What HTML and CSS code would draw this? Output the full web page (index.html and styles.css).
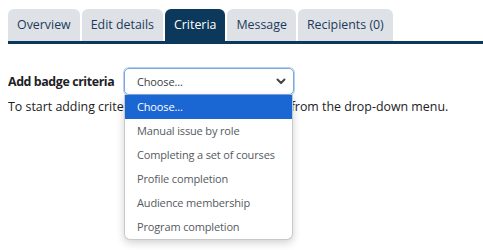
FILE: index.html
```html
<!DOCTYPE html>
<html lang="en">
<head>
  <meta charset="UTF-8">
  <title>Badge criteria</title>
  <link rel="stylesheet" href="styles.css">
</head>
<body>
  <ul class="tabs">
    <li class="tab">Overview</li>
    <li class="tab">Edit details</li>
    <li class="tab active">Criteria</li>
    <li class="tab">Message</li>
    <li class="tab">Recipients (0)</li>
  </ul>

  <div class="criteria">
    <div class="row">
      <label class="label" for="type">Add badge criteria</label>
      <div class="select-wrap">
        <div class="select" id="type">
          <span>Choose...</span>
          <svg class="chev" width="10" height="7" viewBox="0 0 10 7">
            <path d="M1.5 1.5 L5 5 L8.5 1.5" fill="none" stroke="#444" stroke-width="2" stroke-linecap="round" stroke-linejoin="round"/>
          </svg>
        </div>
        <ul class="options">
          <li class="opt selected">Choose...</li>
          <li class="opt">Manual issue by role</li>
          <li class="opt">Completing a set of courses</li>
          <li class="opt">Profile completion</li>
          <li class="opt">Audience membership</li>
          <li class="opt">Program completion</li>
        </ul>
      </div>
    </div>
    <p class="hint">To start adding criteria, select one of the options from the drop-down menu.</p>
  </div>
</body>
</html>
```

FILE: styles.css
```css
* {
  margin: 0;
  padding: 0;
  box-sizing: border-box;
}

html {
  background: #fff;
}

body {
  font-family: "Open Sans", "Noto Sans", sans-serif;
  font-size: 12.4px;
  color: #1d2125;
  margin: 9px 0 0 8px;
  min-height: 241px;
}

.tabs {
  list-style: none;
  display: flex;
  gap: 2px;
  border-bottom: 3px solid #0c385b;
  height: 35px;
}

.tab {
  height: 32px;
  line-height: 32px;
  padding: 0 9px;
  background: #dee2e6;
  color: #1c3a5c;
  border-radius: 6px 6px 0 0;
}

.tab.active {
  background: #0c385b;
  color: #fff;
}

.criteria {
  padding-top: 24px;
}

.row {
  display: flex;
  align-items: center;
}

.label {
  font-weight: bold;
  white-space: nowrap;
  letter-spacing: -0.4px;
  width: 116px;
}

.select-wrap {
  position: relative;
}

.select {
  width: 170px;
  height: 27px;
  border: 1px solid #7aa7e0;
  box-shadow: 0 0 0 1px #b7d0f0;
  border-radius: 5px;
  padding: 0 7px 0 12px;
  display: flex;
  align-items: center;
  justify-content: space-between;
  font-size: 11px;
  letter-spacing: -0.15px;
  color: #3b3f44;
}

.options {
  list-style: none;
  position: absolute;
  top: 27px;
  left: 0;
  width: 169px;
  background: #fff;
  border: 1px solid #c8c8c8;
  border-top: none;
  border-radius: 0 0 6px 6px;
  box-shadow: 0 3px 8px rgba(0, 0, 0, 0.18);
  overflow: hidden;
}

.opt {
  height: 24px;
  line-height: 24px;
  padding-left: 12px;
  font-size: 11px;
  letter-spacing: -0.15px;
  color: #555a60;
}

.opt.selected {
  background: #1a66d2;
  color: #fff;
}

.hint {
  margin-top: 3px;
}
```
